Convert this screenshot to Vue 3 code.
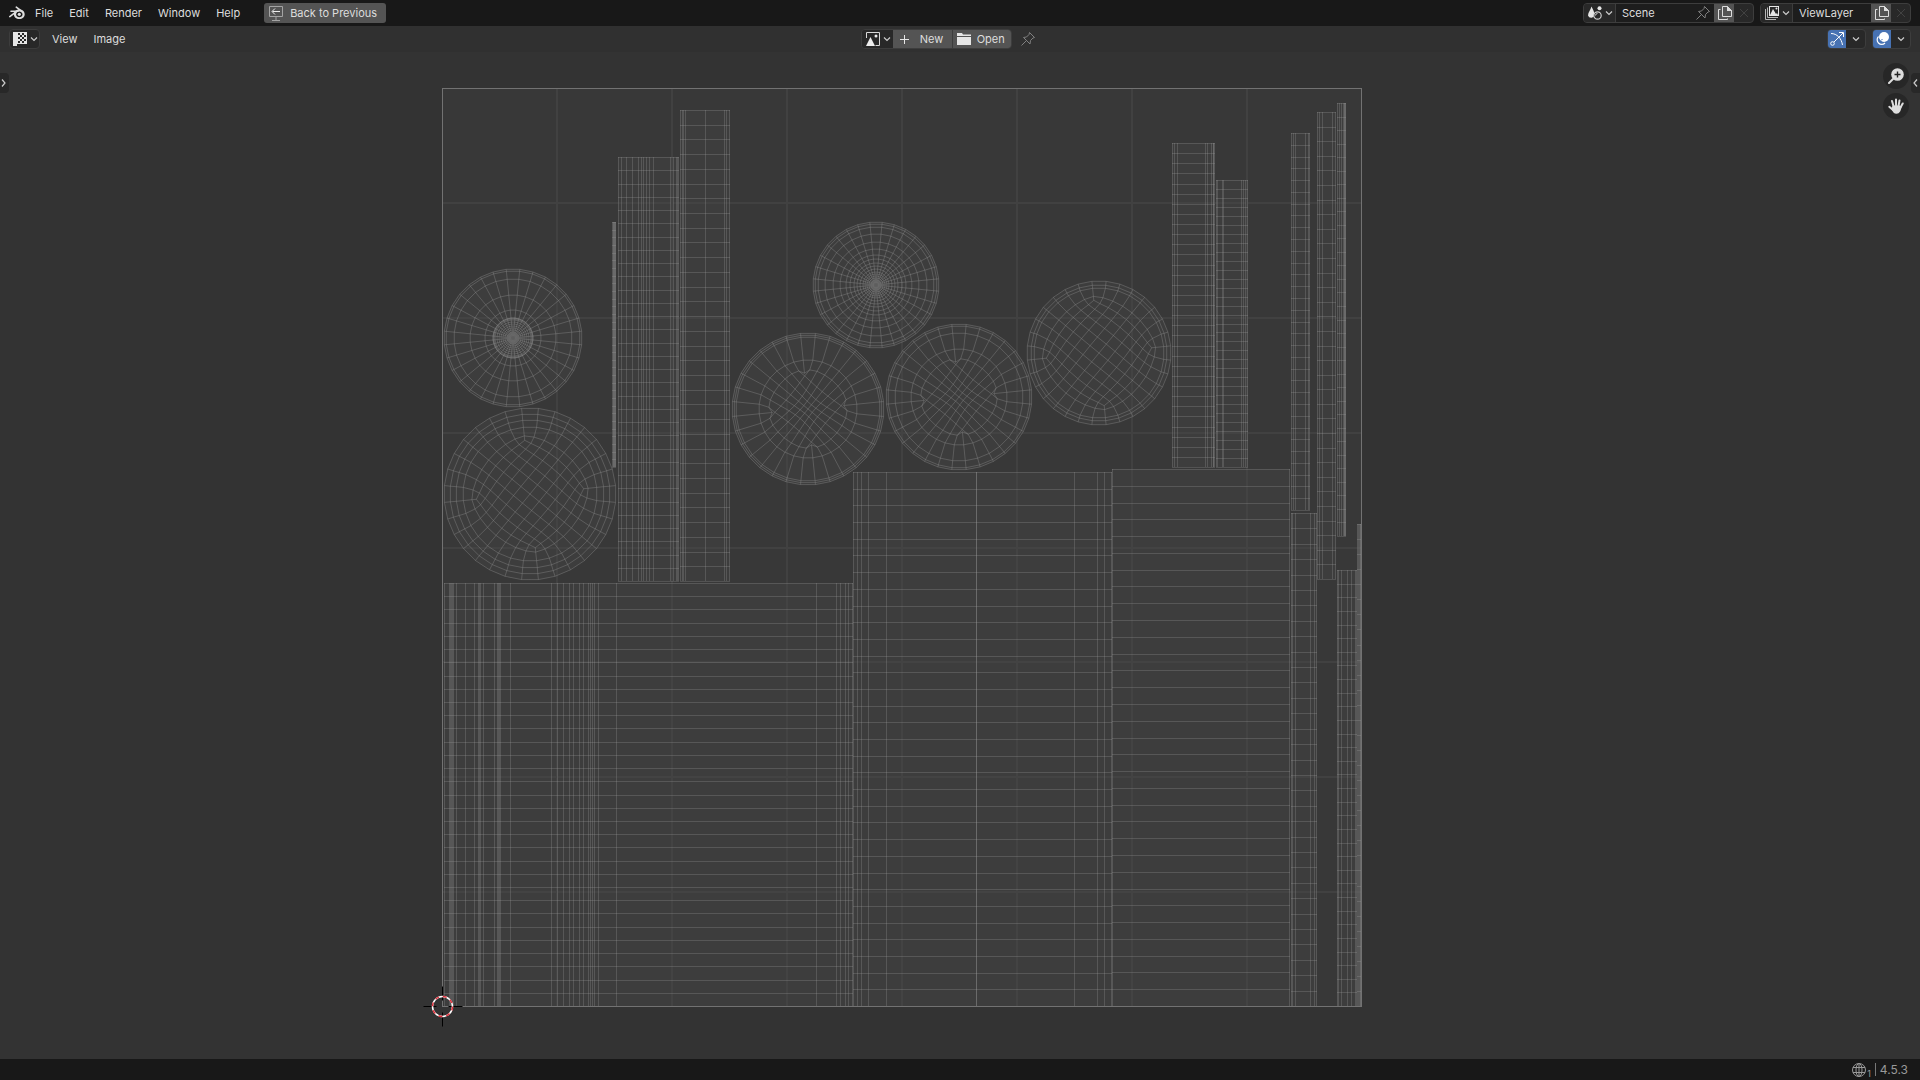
<script setup>
const menus = ['File', 'Edit', 'Render', 'Window', 'Help']
const editorMenus = ['View', 'Image']

// UV tile: one unit square with an 8 x 8 grid
const tile = { x: 442, y: 88, size: 919 }
const tilePath = [1, 2, 3, 4, 5, 6, 7]
  .map((i) => `M${tile.x + i * 115} ${tile.y}v${tile.size}M${tile.x} ${tile.y + Math.round((i * tile.size) / 8)}h${tile.size}`)
  .join('')

// Unwrapped cylinder strips: vertical edge positions, top, bottom, 32 rows each
const strips = [
  { top: 583, bottom: 1006, xs: [444, 449, 450, 451, 452, 453, 456, 465, 474, 478, 479, 480, 483, 494, 497, 498, 499, 500, 510, 551, 557, 563, 569, 573, 579, 583, 588, 590, 592, 594, 598, 616, 816, 836, 840, 845, 848, 852] },
  { top: 472, bottom: 1006, xs: [853, 857, 861, 868, 886, 976, 976, 1074, 1097, 1104, 1111] },
  { top: 469, bottom: 1006, xs: [1112, 1289] },
  { top: 513, bottom: 1006, xs: [1291, 1292, 1295, 1310, 1314, 1316] },
  { top: 133, bottom: 510, xs: [1291, 1293, 1295, 1305, 1308, 1309] },
  { top: 112, bottom: 579, xs: [1317, 1319, 1322, 1332, 1335] },
  { top: 103, bottom: 536, xs: [1337, 1339, 1341, 1343, 1344, 1344, 1345, 1345] },
  { top: 570, bottom: 1006, xs: [1337, 1338, 1341, 1347, 1351, 1355, 1356] },
  { top: 524, bottom: 1006, xs: [1357, 1358, 1359, 1360, 1360] },
  { top: 143, bottom: 467, xs: [1172, 1174, 1177, 1205, 1207, 1211, 1213, 1213, 1214] },
  { top: 180, bottom: 467, xs: [1216, 1217, 1222, 1223, 1241, 1243, 1245, 1247] },
  { top: 157, bottom: 581, xs: [618, 621, 626, 632, 638, 641, 643, 646, 649, 653, 670, 673, 676, 677, 678] },
  { top: 110, bottom: 581, xs: [680, 682, 683, 685, 705, 724, 726, 729] },
  { top: 222, bottom: 467, xs: [612, 613, 613, 614, 614, 615, 615] },
].map((s) => {
  const left = s.xs[0]
  const right = s.xs[s.xs.length - 1]
  const h = s.bottom - s.top
  let d = s.xs.map((x) => `M${x + 0.5} ${s.top}v${h}`).join('')
  for (let i = 0; i <= 32; i++) {
    d += `M${left} ${Math.round(s.top + (i * h) / 32) + 0.5}H${right + 1}`
  }
  return { d, left, top: s.top, width: right - left + 1, height: h }
})

// Caps: either polar fans or discs whose centre is an 8 x 8 quad patch.
// The last ring of a disc is the patch border; density below 1 packs the patch centre,
// above 1 opens it; free is the number of rings outside the patch smoothed with it.
const SEG = 32
const N = 8
const step = (Math.PI * 2) / SEG
const caps = [
  { x: 513, y: 338, rings: [69, 67, 59, 43, 28, 20, 20, 19, 18, 16, 14, 12, 10, 8, 6, 4] },
  { x: 876, y: 285, rings: [63, 61, 58, 51, 43, 36, 30, 26, 22, 19, 16, 13, 11, 9, 7, 5, 3] },
  { x: 530, y: 494, rings: [86, 80, 74, 67, 61, 54], density: 1.15, free: 1 },
  { x: 1099, y: 353, rings: [72, 68, 65, 60, 53], density: 1.15, free: 1 },
  { x: 808, y: 409, rings: [76, 74, 72, 49, 36], density: 0.58, free: 0 },
  { x: 959, y: 397, rings: [73, 71, 64, 48, 35], density: 0.6, free: 0 },
].map((c) => ({ x: c.x, y: c.y, r: c.rings[0], d: c.density ? discPath(c) : fanPath(c) }))

function at(r, i) {
  const a = -Math.PI / 2 + (i - 0.5) * step
  return [r * Math.cos(a), r * Math.sin(a)]
}
function line(c, points) {
  return 'M' + points.map((p) => `${(c.x + p[0]).toFixed(1)} ${(c.y + p[1]).toFixed(1)}`).join('L')
}
function ring(r) {
  return Array.from({ length: SEG }, (_, i) => at(r, i))
}
function fanPath(c) {
  let d = c.rings.map((r) => line(c, ring(r)) + 'Z').join('')
  for (let i = 0; i < SEG; i++) d += line(c, [at(c.rings[0], i), at(2, i)])
  return d
}
function borderIndex(i, j) {
  if (j === 0) return i
  if (i === N) return N + j
  if (j === N) return 3 * N - i
  if (i === 0) return (SEG - j) % SEG
  return -1
}
function discPath(c) {
  const rings = c.rings.map(ring)
  const border = rings.length - 1
  const inner = {}
  const cell = (i, j) => {
    const b = borderIndex(i, j)
    return b >= 0 ? rings[border][b] : inner[i * 9 + j]
  }
  const inward = []
  for (let i = 0; i <= N; i++) {
    for (let j = 0; j <= N; j++) {
      const b = borderIndex(i, j)
      if (b < 0) inner[i * 9 + j] = [0, 0]
      else inward[b] = [Math.min(N - 1, Math.max(1, i)), Math.min(N - 1, Math.max(1, j))]
    }
  }
  const average = (p, around) => {
    p[0] = around.reduce((s, q) => s + q[0], 0) / around.length
    p[1] = around.reduce((s, q) => s + q[1], 0) / around.length
  }
  for (let pass = 0; pass < 150; pass++) {
    for (let i = 1; i < N; i++) {
      for (let j = 1; j < N; j++) {
        average(cell(i, j), [cell(i - 1, j), cell(i + 1, j), cell(i, j - 1), cell(i, j + 1)])
      }
    }
    for (let k = 0; k < SEG; k++) {
      const prev = (k + SEG - 1) % SEG
      const next = (k + 1) % SEG
      if (k % N) {
        const row = rings[border]
        average(row[k], [row[prev], row[next], rings[border - 1][k], cell(...inward[k])])
      }
      for (let m = border - c.free; m < border; m++) {
        const row = rings[m]
        average(row[k], [row[prev], row[next], rings[m - 1][k], rings[m + 1][k]])
      }
    }
  }
  const limit = c.rings[border]
  const pack = (p) => {
    const t = Math.min(1, Math.hypot(p[0], p[1]) / limit)
    const f = c.density + (1 - c.density) * t * t
    p[0] *= f
    p[1] *= f
  }
  rings[border].forEach(pack)
  Object.values(inner).forEach(pack)

  let d = rings.map((r) => line(c, r) + 'Z').join('')
  for (let k = 0; k < SEG; k++) d += line(c, rings.map((r) => r[k]))
  for (let a = 1; a < N; a++) {
    const row = []
    const col = []
    for (let b = 0; b <= N; b++) {
      row.push(cell(b, a))
      col.push(cell(a, b))
    }
    d += line(c, row) + line(c, col)
  }
  return d
}
</script>

<template>
  <div class="app">
    <header class="topbar">
      <nav class="menus">
        <button class="logo" aria-label="Application menu">
          <svg class="icon" viewBox="0 0 16 16">
            <path d="M7.3 2.2 13.6 7M2 6.3h7M.8 11.6 8 6.1" fill="none" stroke="#ddd" stroke-width="1.6" stroke-linecap="round" />
            <path fill-rule="evenodd" fill="#ddd" d="M10.3 4.6c3.1 0 5.4 2 5.4 4.7s-2.3 4.8-5.4 4.8-5.4-2.100-5.400-4.800 2.300-4.700 5.400-4.700zm0 1.900a3 3 0 0 0-3.200 2.900c0 1.600 1.400 2.800 3.200 2.800s3.200-1.200 3.200-2.800-1.400-2.900-3.200-2.900z" />
            <circle cx="10.300" cy="9.300" r="1.600" fill="#ddd" />
          </svg>
        </button>
        <button v-for="m in menus" :key="m" class="menu">{{ m }}</button>
      </nav>
      <button class="back">
        <svg class="icon" viewBox="0 0 16 16" fill="none" stroke="#ccc">
          <path d="M1.500 1.500h13v10h-13zM8 12v3M4 15.500h8" stroke="#a4a4a4" />
          <path d="M12 6.500H4.500M7 3.500l-3 3 3 3" stroke="#eee" />
        </svg>
        <span>Back to Previous</span>
      </button>
      <div class="ids">
        <div class="group">
          <button class="drop" aria-label="Browse scene">
            <svg class="icon" viewBox="0 0 16 16">
              <path d="M4.500 1.500C6 4.500 7.500 7 7.500 10A3.400 3.400 0 0 1 1 10.500C1 7.500 3.500 5 4.500 1.500z" fill="#e6e6e6" />
              <circle cx="12.500" cy="3.300" r="2" fill="#e6e6e6" />
              <circle cx="10.500" cy="10.500" r="3.700" fill="#282828" stroke="#ccc" stroke-width="1.200" />
              <path d="M8.500 10.500a2 2 0 0 1 2-2" fill="none" stroke="#ccc" />
            </svg>
            <svg class="chev" viewBox="0 0 8 8"><path d="M1 2.500l3 3 3-3" /></svg>
          </button>
          <label class="field scene">
            <input type="text" value="Scene" aria-label="Scene name" />
            <svg class="icon dim" viewBox="0 0 16 16"><path d="M9.500 1.500l5 5-1.500.5-2.500 2.500-.5 3.500L3.500 6.500l3-.5L9 3.500zM6.500 9.500 1.500 14.500" /></svg>
          </label>
          <button class="copy" aria-label="New scene">
            <svg class="icon" viewBox="0 0 16 16"><path d="M5.500 1.500h5l4 4v6h-9zM10.500 1.500v4h4M3.500 4.500h-2v10h9v-1" /><path class="solid" d="M10 1l5 5h-5z" /></svg>
          </button>
          <button class="remove" aria-label="Delete scene" disabled>
            <svg class="icon" viewBox="0 0 16 16"><path d="M4 4l8 8M12 4l-8 8" /></svg>
          </button>
        </div>
        <div class="group">
          <button class="drop" aria-label="Browse view layer">
            <svg class="icon" viewBox="0 0 16 16">
              <path d="M1.500 4v10.500H12M3.500 2.500v10H14" fill="none" stroke="#b5b5b5" />
              <path fill="#e6e6e6" d="M5 1h10v10H5z" />
              <path d="M6 2h8v8H6z" fill="#282828" />
              <path d="M6 10 9 4l3 5 1-1 1 2z" fill="#e6e6e6" />
              <circle cx="12.500" cy="3.500" r="1" fill="#e6e6e6" />
            </svg>
            <svg class="chev" viewBox="0 0 8 8"><path d="M1 2.500l3 3 3-3" /></svg>
          </button>
          <label class="field layer"><input type="text" value="ViewLayer" aria-label="View layer name" /></label>
          <button class="copy" aria-label="New view layer">
            <svg class="icon" viewBox="0 0 16 16"><path d="M5.500 1.500h5l4 4v6h-9zM10.500 1.500v4h4M3.500 4.500h-2v10h9v-1" /><path class="solid" d="M10 1l5 5h-5z" /></svg>
          </button>
          <button class="remove" aria-label="Delete view layer" disabled>
            <svg class="icon" viewBox="0 0 16 16"><path d="M4 4l8 8M12 4l-8 8" /></svg>
          </button>
        </div>
      </div>
    </header>

    <div class="toolbar">
      <div class="tools">
        <button class="drop boxed" aria-label="Editor type">
          <svg class="icon" viewBox="0 0 16 16">
            <path fill="#e6e6e6" d="M1 1h14v12H5v2H1z" />
            <path fill="#282828" d="M6 2h8v10H6z" />
            <path fill="#e6e6e6" d="M8 2h2v2H8zM12 2h2v2h-2zM6 4h2v2H6zM10 4h2v2h-2zM8 6h2v2H8zM12 6h2v2h-2zM6 8h2v2H6zM10 8h2v2h-2zM8 10h2v2H8zM12 10h2v2h-2z" />
          </svg>
          <svg class="chev" viewBox="0 0 8 8"><path d="M1 2.500l3 3 3-3" /></svg>
        </button>
        <button v-for="m in editorMenus" :key="m" class="menu">{{ m }}</button>
      </div>
      <div class="image-tools">
        <div class="group">
          <button class="drop" aria-label="Browse image">
            <svg class="icon" viewBox="0 0 16 16">
              <path d="M1.500 7V1.500h13v13H10.500" fill="none" stroke="#d8d8d8" />
              <path d="M1 15 5.500 6 10 15z" fill="#eee" />
              <circle cx="11" cy="5" r="1.500" fill="#eee" />
            </svg>
            <svg class="chev" viewBox="0 0 8 8"><path d="M1 2.500l3 3 3-3" /></svg>
          </button>
          <button class="action">
            <svg class="icon" viewBox="0 0 16 16"><path d="M8.500 4v9M4 8.500h9" fill="none" stroke="#e6e6e6" /></svg>
            <span class="new">New</span>
          </button>
          <button class="action">
            <svg class="icon" viewBox="0 0 16 16"><path d="M1 5V2h5l1 1.500h8V5zM1 6h14v8H1z" fill="#e6e6e6" /></svg>
            <span class="open">Open</span>
          </button>
        </div>
        <button class="pin" aria-label="Pin">
          <svg class="icon dim" viewBox="0 0 16 16"><path d="M9.500 1.500l5 5-1.500.5-2.500 2.500-.5 3.500L3.500 6.500l3-.5L9 3.500zM6.500 9.500 1.500 14.500" /></svg>
        </button>
      </div>
      <div class="toggles">
        <div class="group">
          <button class="toggle" aria-label="Show gizmos" aria-pressed="true">
            <svg class="icon" viewBox="0 0 16 16" fill="none" stroke="#fff">
              <path d="M2 2.500c6 0 10.500 5 11.500 11.500M5 11 14 2M10 1.500h4.500V6" />
              <circle cx="3.500" cy="12.500" r="1.800" />
            </svg>
          </button>
          <button class="arrow" aria-label="Gizmo options"><svg class="chev" viewBox="0 0 8 8"><path d="M1 2.500l3 3 3-3" /></svg></button>
        </div>
        <div class="group">
          <button class="toggle" aria-label="Show overlays" aria-pressed="true">
            <svg class="icon" viewBox="0 0 16 16">
              <circle cx="10" cy="6" r="5" fill="#fff" />
              <path d="M4.500 5.500a4.500 4.500 0 1 0 6.500 6.500" fill="none" stroke="#fff" stroke-width="1.200" />
              <path d="M5.500 8.500a3 3 0 0 0 3 3" fill="none" stroke="#4772b3" />
              <path d="M7 9.500 8.500 8" stroke="#4772b3" />
            </svg>
          </button>
          <button class="arrow" aria-label="Overlay options"><svg class="chev" viewBox="0 0 8 8"><path d="M1 2.500l3 3 3-3" /></svg></button>
        </div>
      </div>
    </div>

    <main class="editor">
      <svg class="canvas" viewBox="0 52 1920 1007" role="img" aria-label="UV layout">
        <rect :x="tile.x" :y="tile.y" :width="tile.size" :height="tile.size" fill="#383838" />
        <rect v-for="(s, i) in strips" :key="'f' + i" class="fill" :x="s.left" :y="s.top" :width="s.width" :height="s.height" />
        <circle v-for="(c, i) in caps" :key="'c' + i" class="fill" :cx="c.x" :cy="c.y" :r="c.r" />
        <path class="grid" :d="tilePath" />
        <path v-for="(s, i) in strips" :key="'s' + i" class="edge" :d="s.d" />
        <path v-for="(c, i) in caps" :key="'e' + i" class="edge cap" :d="c.d" />
        <circle class="pole" :cx="caps[0].x" :cy="caps[0].y" r="6" />
        <circle class="pole" :cx="caps[1].x" :cy="caps[1].y" r="5" />
        <rect class="frame" x="442.500" y="88.500" width="919" height="918" />
        <g transform="translate(442.500 1006.500)" fill="none">
          <path d="M-19 0H-6M6 0H20M0 -20V-6M0 6V20" stroke="#000" />
          <circle r="10" stroke="#fff" stroke-width="1.500" />
          <circle r="10" stroke="#e0303c" stroke-width="1.500" stroke-dasharray="3.927 3.927" />
        </g>
      </svg>
      <button class="tab left" aria-label="Show toolbar"><svg class="chev tall" viewBox="0 0 8 10"><path d="M2 1.500l3 3.500-3 3.500" /></svg></button>
      <button class="tab right" aria-label="Show sidebar"><svg class="chev tall" viewBox="0 0 8 10"><path d="M6 1.500 3 5l3 3.500" /></svg></button>
      <div class="gizmos">
        <button aria-label="Zoom">
          <svg class="icon" viewBox="0 0 16 16">
            <circle cx="9.500" cy="6.500" r="6.300" fill="#ddd" />
            <path d="M5 11 1 15" stroke="#ddd" stroke-width="2" stroke-linecap="round" />
            <path d="M9.500 3.500v6M6.500 6.500h6" stroke="#222" stroke-width="1.400" />
          </svg>
        </button>
        <button aria-label="Move view">
          <svg class="icon" viewBox="0 0 16 16" fill="none" stroke="#ddd" stroke-linecap="round">
            <path d="M5.500 8 4 3M8 7.500V1.500M10.500 8l1-5.500M12.500 9.500 14.700 5.500M5 12 1.300 8.800" stroke-width="2" />
            <path d="M4.500 7.500h7l2 1.500c-.5 3.500-2 6.700-5 6.700-2.500 0-4-2-5-5z" fill="#ddd" stroke="none" />
          </svg>
        </button>
      </div>
    </main>

    <footer class="status">
      <span class="net">
        <svg class="icon" viewBox="0 0 16 16" fill="none" stroke="#999">
          <circle cx="8" cy="8" r="6.500" /><ellipse cx="8" cy="8" rx="3" ry="6.500" /><path d="M8 1.500v13M2 5.500h12M2 10.500h12" />
        </svg>
        <small>1</small>
      </span>
      <span class="version">4.5.3</span>
    </footer>
  </div>
</template>

<style>
body {
  background: #333;
}
</style>

<style scoped>
.app {
  display: flex;
  flex-direction: column;
  height: 100vh;
  background: #333;
  color: #ddd;
  font: 11px/16px Inter, "Noto Sans", sans-serif;
  overflow: hidden;
}
button,
input {
  margin: 0;
  padding: 0;
  border: 0;
  background: none;
  color: inherit;
  font: inherit;
}
button {
  display: flex;
  align-items: center;
}
.icon {
  display: block;
  width: 16px;
  height: 16px;
  flex: none;
}
.chev {
  display: block;
  width: 8px;
  height: 8px;
  flex: none;
  fill: none;
  stroke: #ccc;
  stroke-width: 1.2;
}
.chev.tall {
  height: 10px;
}
.dim {
  fill: none;
  stroke: #808080;
}
.topbar {
  display: flex;
  align-items: center;
  height: 26px;
  flex: none;
  padding: 0 9px;
  box-sizing: border-box;
  background: #181818;
}
.menus,
.tools {
  display: flex;
  align-items: center;
}
.logo {
  margin-right: 2px;
}
.menu {
  height: 20px;
  padding: 0 8px;
}
.back {
  gap: 6px;
  height: 20px;
  margin-left: 16px;
  padding: 0 9px 0 4px;
  border-radius: 3px;
  background: #545454;
}
.ids {
  display: flex;
  gap: 6px;
  margin-left: auto;
}
.group {
  display: flex;
  height: 20px;
  box-sizing: border-box;
  border: 1px solid #3d3d3d;
  border-radius: 4px;
  overflow: hidden;
  background: #282828;
}
.drop {
  gap: 2px;
  width: 31px;
  padding-left: 3px;
  box-sizing: border-box;
  flex: none;
  background: #282828;
}
.boxed {
  height: 20px;
  padding-left: 2px;
  border: 1px solid #3d3d3d;
  border-radius: 4px;
}
.field {
  display: flex;
  align-items: center;
  box-sizing: border-box;
  padding: 0 3px 0 6px;
  border-left: 1px solid #3d3d3d;
  background: #1d1d1d;
}
.scene {
  width: 99px;
}
.layer {
  width: 79px;
}
.field input {
  width: 100%;
  min-width: 0;
}
.copy {
  width: 20px;
  padding-left: 3px;
  background: #545454;
}
.remove {
  width: 19px;
  justify-content: center;
}
.copy path {
  fill: none;
  stroke: #ddd;
}
.copy .solid {
  fill: #ddd;
  stroke: none;
}
.remove path {
  stroke: #424242;
}
.toolbar {
  display: flex;
  align-items: center;
  justify-content: space-between;
  height: 26px;
  flex: none;
  padding: 0 9px;
  box-sizing: border-box;
  background: #303030;
}
.tools .boxed {
  margin-right: 4px;
}
.image-tools {
  display: flex;
  align-items: center;
  gap: 8px;
}
.action {
  width: 59px;
  padding-left: 3px;
  box-sizing: border-box;
  background: #545454;
}
.action + .action {
  border-left: 1px solid #3d3d3d;
}
.new {
  margin-left: 8px;
}
.open {
  margin-left: 5px;
}
.toggles {
  display: flex;
  justify-content: flex-end;
  gap: 6px;
  min-width: 148px;
}
.toggle {
  width: 18px;
  justify-content: center;
  background: #4772b3;
}
.arrow {
  width: 19px;
  padding-left: 6px;
}
.editor {
  position: relative;
  flex: 1;
  min-height: 0;
}
.canvas {
  display: block;
  width: 100%;
  height: 100%;
}
.fill {
  fill: #3d3d3d;
}
.grid {
  fill: none;
  stroke: #484848;
  stroke-width: 2;
  opacity: 0.6;
}
.edge {
  fill: none;
  stroke: #a0a0a0;
  stroke-opacity: 0.27;
}
.cap {
  stroke-opacity: 0.32;
}
.pole {
  fill: #666;
  fill-opacity: 0.8;
}
.frame {
  fill: none;
  stroke: #727272;
}
.tab {
  position: absolute;
  top: 21px;
  width: 9px;
  height: 20px;
  background: #282828;
}
.tab.left {
  left: 0;
  border-radius: 0 4px 4px 0;
}
.tab.right {
  right: 0;
  border-radius: 4px 0 0 4px;
}
.gizmos {
  position: absolute;
  top: 11px;
  right: 11px;
  display: flex;
  flex-direction: column;
  gap: 4px;
}
.gizmos button {
  justify-content: center;
  width: 26px;
  height: 26px;
  border-radius: 50%;
  background: #272727;
}
.status {
  display: flex;
  align-items: center;
  justify-content: flex-end;
  gap: 4px;
  height: 21px;
  flex: none;
  padding: 0 12px;
  box-sizing: border-box;
  background: #181818;
  color: #999;
}
.net {
  display: flex;
  align-items: flex-end;
}
.net small {
  font-size: 9px;
  line-height: 9px;
}
.version {
  padding-left: 4px;
  border-left: 1px solid #777;
  font-size: 12px;
  line-height: 13px;
}
</style>
